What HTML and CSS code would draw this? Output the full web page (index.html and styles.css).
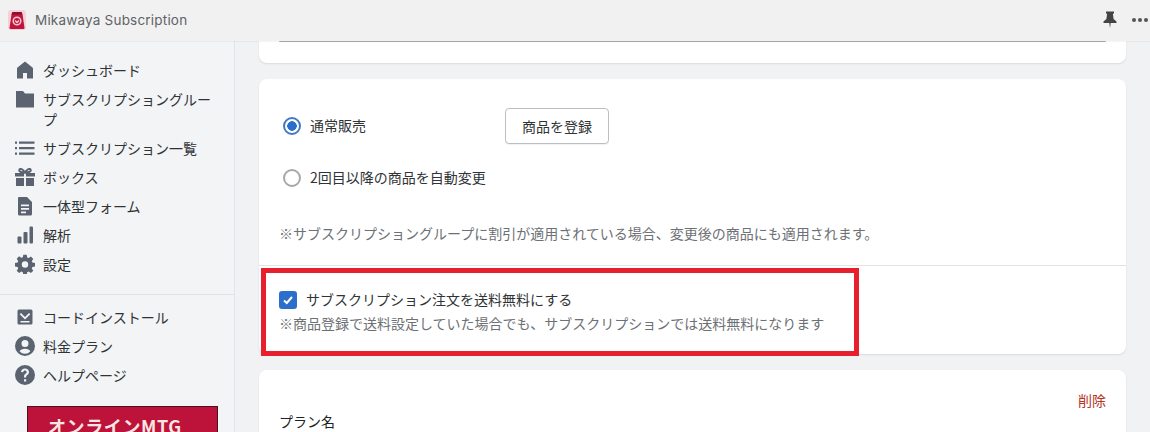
FILE: index.html
```html
<!DOCTYPE html>
<html lang="ja">
<head>
  <meta charset="UTF-8">
  <title>Mikawaya Subscription</title>
  <link rel="stylesheet" href="styles.css">
</head>
<body>
  <header class="topbar">
    <svg class="app-logo" width="18" height="20" viewBox="0 0 18 20">
      <rect x="0" y="0" width="18" height="20" rx="3" fill="#f3d3d8"/>
      <path fill="#c0143c" d="M4.500 2h9l1 2.500 2 13.500a1 1 0 0 1-1 1H2.500a1 1 0 0 1-1-1l2-13.500z"/>
      <path fill="#8a0f2c" d="M4.500 2h9l1 2.500h-11z"/>
      <circle cx="9" cy="11" r="3.800" fill="none" stroke="#f6c9d2" stroke-width="1.500"/>
      <path fill="none" stroke="#f6c9d2" stroke-width="1.300" d="M7 10.500 9 12.500l2-2"/>
    </svg>
    <span class="app-name">Mikawaya Subscription</span>
    <div class="topbar-actions">
      <svg width="14" height="17" viewBox="0 0 14 17"><path fill="#444" d="M3 .5h8v1.700L9.900 3l.7 5 2.900 2.500V12H7.700L7 17l-.7-5H.5v-1.500L3.400 8l.7-5L3 2.200z"/></svg>
      <div class="dots"><i></i><i></i><i></i></div>
    </div>
  </header>

  <div class="layout">
    <nav class="sidebar">
      <ul class="nav-list">
        <li class="nav-item">
          <svg viewBox="0 0 20 20"><path d="M10 1.500 2.500 7.500a2 2 0 0 0-.5 1.300V18.500h6V13h4v5.500h6V8.800a2 2 0 0 0-.5-1.300z"/></svg>
          <span>ダッシュボード</span>
        </li>
        <li class="nav-item">
          <svg viewBox="0 0 20 20"><path d="M1 2h7l2 2.500h9V18.500H1z"/></svg>
          <span>サブスクリプショングループ</span>
        </li>
        <li class="nav-item">
          <svg viewBox="0 0 20 20"><path d="M0 3.500h2v2.200H0zM4 3.500h15.500v2.200H4zM0 9h2v2.200H0zM4 9h15.500v2.200H4zM0 14.500h2v2.200H0zM4 14.500h15.500v2.200H4z"/></svg>
          <span>サブスクリプション一覧</span>
        </li>
        <li class="nav-item">
          <svg viewBox="0 0 20 20"><path d="M0 6h9v3.500H0zM11 6h9v3.500h-9zM1 11h8v8H1zM11 11h8v8h-8z"/><path fill="none" stroke="#5c6370" stroke-width="2" d="M10 5.500C8 2 5 1 4.300 3 3.900 5 7 5.500 10 5.500c3 0 6.100-.5 5.700-2.500C15 1 12 2 10 5.500z"/></svg>
          <span>ボックス</span>
        </li>
        <li class="nav-item">
          <svg viewBox="0 0 20 20"><path fill-rule="evenodd" d="M4 1h8l5 5v12a1.500 1.500 0 0 1-1.500 1.500h-11A1.500 1.500 0 0 1 3 18V2a1 1 0 0 1 1-1zM6 8.500v1.800h8V8.500zM6 12v1.800h8V12zM6 15.500v1.800h5v-1.800z"/></svg>
          <span>一体型フォーム</span>
        </li>
        <li class="nav-item">
          <svg viewBox="0 0 20 20"><rect x="2.500" y="11.500" width="4" height="7" rx="1"/><rect x="8.500" y="7" width="4" height="11.500" rx="1"/><rect x="14.500" y="1.500" width="3.500" height="17" rx="1"/></svg>
          <span>解析</span>
        </li>
        <li class="nav-item">
          <svg viewBox="0 0 20 20"><path fill-rule="evenodd" d="M8.300 .8h3.400l.5 2.600 1.500.6 2.200-1.500 2.400 2.400-1.500 2.200.6 1.500 2.600.5v3.400l-2.600.5-.6 1.500 1.500 2.200-2.400 2.400-2.200-1.500-1.500.6-.5 2.600H8.300l-.5-2.600-1.500-.6-2.200 1.500-2.400-2.400 1.500-2.200-.6-1.500-2.600-.5V8.900l2.600-.5.6-1.500-1.500-2.200 2.400-2.400 2.200 1.500 1.500-.6zM10 7.300a3.200 3.200 0 1 0 0 6.400 3.200 3.200 0 0 0 0-6.400z"/></svg>
          <span>設定</span>
        </li>
      </ul>

      <hr class="nav-divider">

      <ul class="nav-list">
        <li class="nav-item">
          <svg viewBox="0 0 20 20"><path fill-rule="evenodd" d="M4 2.500h12a1.500 1.500 0 0 1 1.500 1.500v12a1.500 1.500 0 0 1-1.500 1.500H4A1.500 1.500 0 0 1 2.500 16V4A1.500 1.500 0 0 1 4 2.500zM6 6l-1.300 1.300L10 12.500l5.300-5.200L14 6l-4 4zM5.500 14v1.500h9V14z"/></svg>
          <span>コードインストール</span>
        </li>
        <li class="nav-item">
          <svg viewBox="0 0 20 20"><path fill-rule="evenodd" d="M10 0a10 10 0 1 1 0 20 10 10 0 0 1 0-20zM10 4a3.500 3.500 0 1 0 0 7 3.500 3.500 0 0 0 0-7zM10 12.800c-2.600 0-4.600 1-5.400 2.400a7 7 0 0 0 10.800 0c-.8-1.400-2.800-2.400-5.400-2.400z"/></svg>
          <span>料金プラン</span>
        </li>
        <li class="nav-item">
          <svg viewBox="0 0 20 20"><path fill-rule="evenodd" d="M10 0a10 10 0 1 1 0 20 10 10 0 0 1 0-20zM9 14.200v2.300h2.200v-2.300zM10 3.500C7.800 3.500 6.200 4.800 6 7l2.200.3c.1-1 .8-1.700 1.800-1.700s1.700.6 1.700 1.500c0 .7-.4 1.100-1.200 1.700C9.500 9.500 9 10.300 9 11.500v1h2.200v-.7c0-.7.300-1.100 1.100-1.700 1.100-.8 1.700-1.700 1.700-3 0-2.100-1.700-3.600-4-3.600z"/></svg>
          <span>ヘルプページ</span>
        </li>
      </ul>

      <div class="banner">オンラインMTG</div>
    </nav>

    <main class="content">
      <section class="card card-first">
        <div class="input-box"></div>
      </section>

      <section class="card">
        <div class="card-body plan-options">
          <div class="option-row">
            <label class="radio-label">
              <span class="radio radio-on"></span>
              通常販売
            </label>
            <button class="btn">商品を登録</button>
          </div>
          <label class="radio-label radio-second">
            <span class="radio"></span>
            2回目以降の商品を自動変更
          </label>
          <p class="note note-discount">※サブスクリプショングループに割引が適用されている場合、変更後の商品にも適用されます。</p>
        </div>
        <div class="card-body shipping">
          <label class="check-label">
            <span class="checkbox">
              <svg width="12" height="12" viewBox="0 0 12 12"><path fill="none" stroke="#fff" stroke-width="2" d="M2 6.500 4.800 9 10 3"/></svg>
            </span>
            サブスクリプション注文を送料無料にする
          </label>
          <p class="note">※商品登録で送料設定していた場合でも、サブスクリプションでは送料無料になります</p>
        </div>
      </section>

      <section class="card">
        <div class="plan-head">
          <a class="delete-link">削除</a>
          <div class="plan-name">プラン名</div>
        </div>
      </section>
    </main>
  </div>

  <div class="highlight"></div>
</body>
</html>
```

FILE: styles.css
```css
* {
  box-sizing: border-box;
}

html,
body {
  height: 432px;
  overflow: hidden;
}

body {
  margin: 0;
  background-color: #f1f2f4;
  color: #202223;
  font-family: "Noto Sans CJK JP", "Inter", sans-serif;
  font-size: 14px;
  line-height: 20px;
}

.topbar {
  display: flex;
  align-items: center;
  height: 41px;
  padding: 0 2px 2px 8px;
  background-color: #f1f1f1;
  box-shadow: 0 1px 1px rgba(0, 0, 0, 0.04);
  position: relative;
  z-index: 2;
}

.app-name {
  margin-left: 9px;
  font-family: "Inter", sans-serif;
  font-size: 13.500px;
  color: #5f6368;
  letter-spacing: 0.2px;
}

.topbar-actions {
  display: flex;
  align-items: center;
  gap: 15px;
  margin-left: auto;
}

.dots {
  display: flex;
  gap: 2px;
}

.dots i {
  width: 4px;
  height: 4px;
  border-radius: 50%;
  background-color: #555;
}

.layout {
  display: flex;
  height: 391px;
}

.sidebar {
  flex: none;
  width: 235px;
  padding-top: 15px;
  border-right: 1px solid #e3e4e7;
  background-color: #f2f4f6;
  overflow: hidden;
}

.nav-list {
  margin: 0;
  padding: 0 15px 0 15px;
  list-style: none;
}

.nav-item {
  display: flex;
  align-items: flex-start;
  gap: 8px;
  padding: 4px 0 5px;
  font-size: 14px;
  line-height: 20px;
  color: #303335;
}

.nav-item svg {
  flex: none;
  width: 20px;
  height: 20px;
  fill: #5c6370;
}

.nav-item span {
  min-width: 0;
}

.nav-divider {
  margin: 15px 0 8px;
  border: none;
  border-top: 1px solid #e1e3e5;
}

.banner {
  width: 191px;
  height: 60px;
  margin: 16px 0 0 27px;
  padding: 6px 0 0 20px;
  border: 1px solid #4d1020;
  background-color: #bd1239;
  color: #f9e6e2;
  font-size: 18px;
  line-height: 26px;
  font-weight: 700;
  letter-spacing: 0.6px;
  white-space: nowrap;
}

.content {
  flex: 1;
  min-width: 0;
  padding: 0 24px 0 24px;
  overflow: hidden;
}

.card {
  margin-bottom: 16px;
  border-radius: 8px;
  background-color: #fff;
  box-shadow: 0 1px 2px rgba(0, 0, 0, 0.1);
}

.card-first {
  height: 22px;
  margin-bottom: 16px;
  padding: 0 20px;
  border-radius: 0 0 8px 8px;
}

.input-box {
  height: 1px;
  border-radius: 0 0 3px 3px;
  background-color: #a8acb0;
}

.card-body {
  padding: 0 20px;
}

.plan-options {
  height: 187px;
  padding-top: 29px;
  border-bottom: 1px solid #e1e3e5;
}

.option-row {
  display: flex;
  align-items: center;
  height: 36px;
}

.radio-label {
  display: flex;
  align-items: center;
  gap: 9px;
  width: 226px;
  padding: 0 0 2px 4px;
  color: #303335;
  white-space: nowrap;
}

.radio-second {
  width: auto;
  margin-top: 16px;
  height: 36px;
}

.radio {
  flex: none;
  width: 18px;
  height: 18px;
  margin-top: 2px;
  border: 2px solid #a8a8a8;
  border-radius: 50%;
}

.radio-on {
  border-color: #3f7ac4;
  background: radial-gradient(circle, #2c6ecb 0 4.500px, #fff 5px);
}

.btn {
  width: 104px;
  height: 36px;
  border: 1px solid #babfc3;
  border-radius: 4px;
  background-color: #fff;
  box-shadow: 0 1px 0 rgba(0, 0, 0, 0.05);
  color: #303335;
  font: inherit;
}

.note {
  margin: 0;
  color: #6d7175;
  white-space: nowrap;
}

.note-discount {
  margin-top: 27px;
}

.shipping {
  height: 88px;
  padding-top: 23px;
}

.check-label {
  display: flex;
  align-items: center;
  gap: 9px;
  height: 20px;
  color: #303335;
}

.checkbox {
  display: flex;
  align-items: center;
  justify-content: center;
  width: 18px;
  height: 18px;
  margin-top: 1px;
  border-radius: 3px;
  background-color: #2c6ecb;
}

.shipping .note {
  margin-top: 4px;
}

.plan-head {
  height: 70px;
  padding: 20px 20px 0;
}

.delete-link {
  display: block;
  color: #b5341f;
  text-align: right;
}

.plan-name {
  margin-top: 1px;
}

/* annotation box drawn over the screenshot */
.highlight {
  position: absolute;
  top: 268px;
  left: 261px;
  width: 598px;
  height: 88px;
  border: 5px solid #e8202e;
  z-index: 3;
}
```
